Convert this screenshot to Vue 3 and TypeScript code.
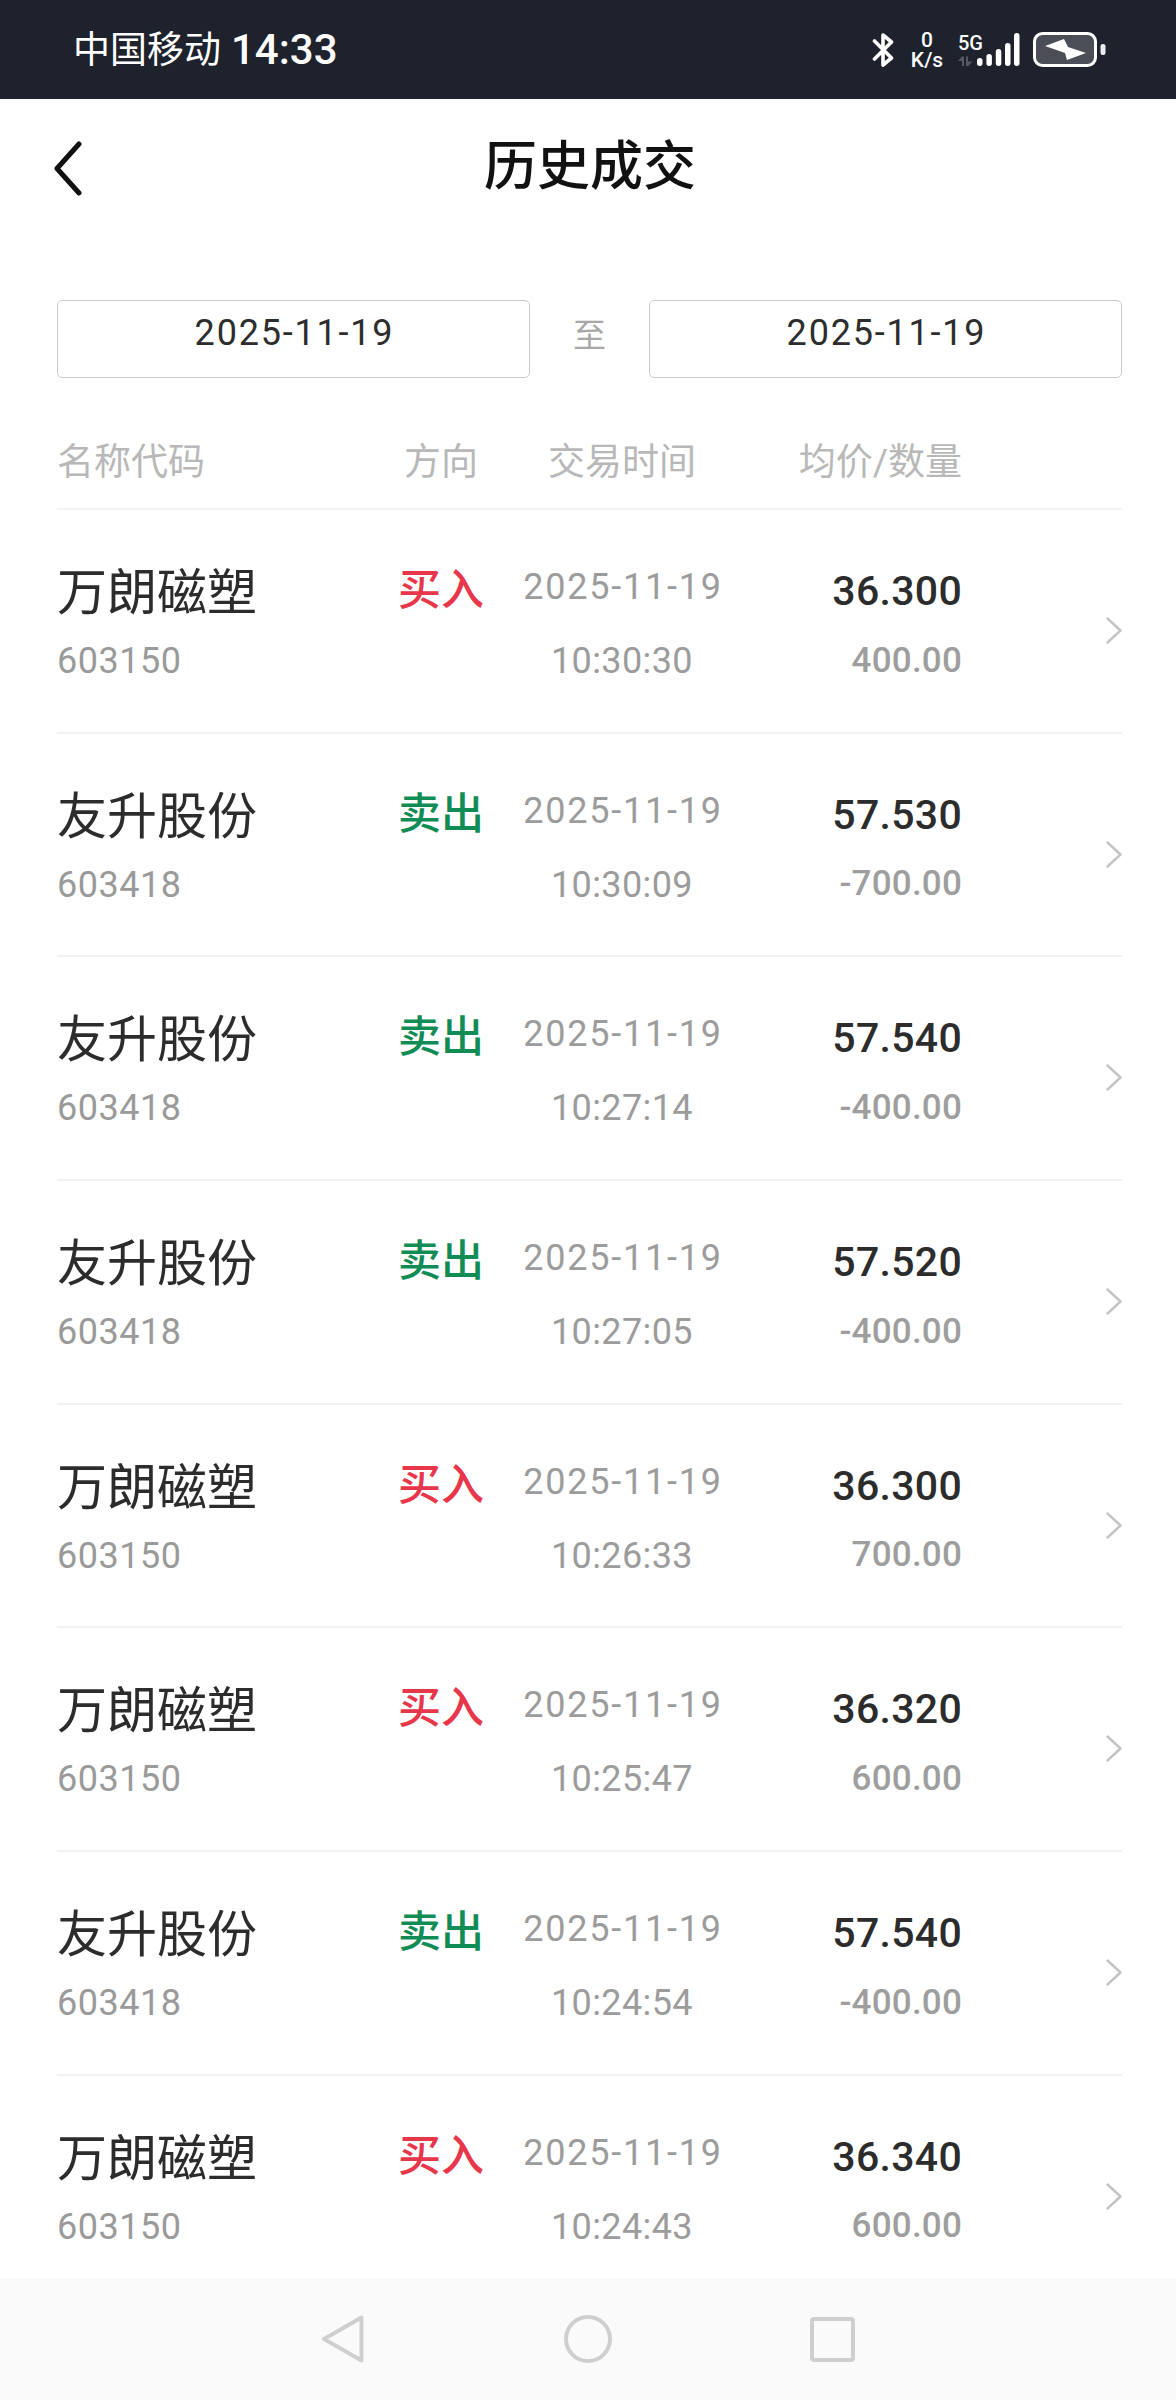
<script setup lang="ts">
type Trade = {
  name: string;
  code: string;
  side: "buy" | "sell";
  time: string;
  price: string;
  qty: string;
};

const trades: Trade[] = [
  { name: "万朗磁塑", code: "603150", side: "buy", time: "10:30:30", price: "36.300", qty: "400.00" },
  { name: "友升股份", code: "603418", side: "sell", time: "10:30:09", price: "57.530", qty: "-700.00" },
  { name: "友升股份", code: "603418", side: "sell", time: "10:27:14", price: "57.540", qty: "-400.00" },
  { name: "友升股份", code: "603418", side: "sell", time: "10:27:05", price: "57.520", qty: "-400.00" },
  { name: "万朗磁塑", code: "603150", side: "buy", time: "10:26:33", price: "36.300", qty: "700.00" },
  { name: "万朗磁塑", code: "603150", side: "buy", time: "10:25:47", price: "36.320", qty: "600.00" },
  { name: "友升股份", code: "603418", side: "sell", time: "10:24:54", price: "57.540", qty: "-400.00" },
  { name: "万朗磁塑", code: "603150", side: "buy", time: "10:24:43", price: "36.340", qty: "600.00" },
];

const day = "2025-11-19";
</script>

<template>
  <div class="page">
    <header class="status">
      <div class="status-left">
        <span class="carrier">中国移动</span>
        <span class="clock">14:33</span>
      </div>
      <div class="status-right">
        <svg class="bt" viewBox="0 0 22 36" fill="none" stroke="#fff" stroke-width="3.6" stroke-linecap="round" stroke-linejoin="round">
          <path d="M2.500 9 19.500 26 11 33V3l8.500 7L2.500 27" />
        </svg>
        <div class="speed">
          <span>0</span>
          <span>K/s</span>
        </div>
        <div class="signal">
          <span class="five-g">5G</span>
          <svg viewBox="0 0 62 34" fill="#fff">
            <path d="M4 33V28H0L4 23.500H6V33zM8 23.500V33H10L14.500 28.500H10V23.500z" fill="#565961" />
            <rect x="19" y="25" width="5.500" height="8" rx="2.700" />
            <rect x="28.400" y="21" width="5.500" height="12" rx="2.700" />
            <rect x="37.800" y="16" width="5.500" height="17" rx="2.700" />
            <rect x="47" y="10" width="5.500" height="23" rx="2.700" />
            <rect x="56" y="0" width="5.500" height="33" rx="2.700" />
          </svg>
        </div>
        <svg class="battery" viewBox="0 0 73 36">
          <rect x="1.500" y="1.500" width="61" height="32" rx="8" fill="#4b4d57" stroke="#fff" stroke-width="3" />
          <path d="M12 14 31 7 35 15 53 21 34 28 32 21z" fill="#fff" />
          <rect x="67.500" y="12" width="5" height="11" rx="2.200" fill="#ececee" />
        </svg>
      </div>
    </header>

    <div class="title-bar">
      <svg class="back" viewBox="0 0 30 56" fill="none" stroke="#111" stroke-width="5" stroke-linecap="round" stroke-linejoin="round">
        <path d="M26 3 4 27.500 26 52" />
      </svg>
      <h1 class="title">历史成交</h1>
    </div>

    <div class="range">
      <div class="date-box">{{ day }}</div>
      <span class="range-to">至</span>
      <div class="date-box">{{ day }}</div>
    </div>

    <div class="grid head">
      <span>名称代码</span>
      <span class="center">方向</span>
      <span class="center">交易时间</span>
      <span class="right">均价/数量</span>
    </div>

    <div class="list">
      <div v-for="(t, i) in trades" :key="i" class="grid row">
        <div class="cell">
          <span class="name">{{ t.name }}</span>
          <span class="code">{{ t.code }}</span>
        </div>
        <div class="cell center">
          <span class="side" :class="t.side">{{ t.side === "buy" ? "买入" : "卖出" }}</span>
        </div>
        <div class="cell center">
          <span class="when date">{{ day }}</span>
          <span class="when">{{ t.time }}</span>
        </div>
        <div class="cell right">
          <span class="price">{{ t.price }}</span>
          <span class="qty">{{ t.qty }}</span>
        </div>
        <svg class="chevron" viewBox="0 0 16 27" fill="none" stroke="#c4c4c4" stroke-width="2.400" stroke-linecap="round" stroke-linejoin="round">
          <path d="M1.500 1.500 14.500 13.500 1.500 25.500" />
        </svg>
      </div>
    </div>

    <nav class="nav">
      <svg class="nav-back" viewBox="0 0 43 48" fill="none" stroke="#cfcfcf" stroke-width="4" stroke-linejoin="round">
        <path d="M40.500 2.500V45.500L3 24z" />
      </svg>
      <svg class="nav-home" viewBox="0 0 48 48" fill="none" stroke="#cfcfcf" stroke-width="4">
        <circle cx="24" cy="24" r="22" />
      </svg>
      <svg class="nav-recent" viewBox="0 0 45 45" fill="none" stroke="#cfcfcf" stroke-width="4" stroke-linejoin="round">
        <rect x="2" y="2" width="41" height="41" rx="2" />
      </svg>
    </nav>
  </div>
</template>

<style>
body {
  margin: 0;
  background: #fff;
}
</style>

<style scoped>
.page {
  width: 1176px;
  height: 2400px;
  display: flex;
  flex-direction: column;
  overflow: hidden;
  background: #fff;
  font-family: Roboto, "Noto Sans CJK SC", sans-serif;
}

.status {
  flex: 0 0 99px;
  display: flex;
  align-items: center;
  justify-content: space-between;
  padding: 0 70px 0 73px;
  background: #1e222d;
  color: #fff;
}

.status-left {
  display: flex;
  align-items: center;
  gap: 10px;
}

.carrier {
  font-size: 37px;
  margin-bottom: 5px;
}

.clock {
  font-size: 42px;
  font-weight: 500;
}

.status-right {
  display: flex;
  align-items: center;
}

.bt {
  width: 22px;
  height: 36px;
}

.speed {
  width: 34px;
  margin-left: 16px;
  display: flex;
  flex-direction: column;
  align-items: center;
  font-size: 21px;
  font-weight: 500;
  line-height: 20px;
}

.signal {
  position: relative;
  width: 62px;
  height: 34px;
  margin-left: 14px;
}

.signal svg {
  display: block;
  width: 62px;
  height: 34px;
}

.five-g {
  position: absolute;
  left: 0;
  top: 1px;
  font-size: 20px;
  line-height: 18px;
  font-weight: 500;
}

.battery {
  width: 73px;
  height: 36px;
  margin-left: 13px;
}

.title-bar {
  position: relative;
  flex: 0 0 132px;
  display: flex;
  align-items: center;
  justify-content: center;
}

.back {
  position: absolute;
  left: 53px;
  top: 42px;
  width: 30px;
  height: 56px;
}

.title {
  margin: 0;
  font-size: 53px;
  font-weight: 500;
  color: #111;
  line-height: 132px;
  position: relative;
  left: 2px;
  top: 2px;
}

.range {
  margin-top: 69px;
  padding: 0 54px 0 57px;
  display: flex;
  align-items: center;
}

.date-box {
  flex: 1;
  height: 78px;
  box-sizing: border-box;
  border: 1px solid #cccccc;
  border-radius: 5px;
  padding-left: 2px;
  text-align: center;
  font-size: 36px;
  line-height: 64px;
  letter-spacing: 1.800px;
  color: #2d2d2d;
}

.range-to {
  flex: 0 0 119px;
  padding-bottom: 12px;
  text-align: center;
  font-size: 33px;
  color: #a8a8a8;
}

.grid {
  display: grid;
  grid-template-columns: 334px 100px 262px 209px 1fr;
  margin: 0 54px 0 57px;
}

.head {
  height: 132px;
  align-items: center;
  box-sizing: border-box;
  padding-top: 31px;
  font-size: 37px;
  color: #b8b8b8;
  border-bottom: 2px solid #f3f3f3;
}

.list {
  flex: 1;
  min-height: 0;
  overflow: hidden;
}

.row {
  height: 223.700px;
  box-sizing: border-box;
  padding-top: 48px;
  border-bottom: 2px solid #f2f2f2;
}

.cell {
  display: flex;
  flex-direction: column;
}

.center {
  text-align: center;
}

.cell.center {
  align-items: center;
}

.right {
  text-align: right;
}

.cell.right {
  align-items: flex-end;
}

.name {
  padding-top: 2px;
  font-size: 50px;
  line-height: 66px;
  color: #2c2c2c;
}

.code {
  margin-top: 4px;
  font-size: 36px;
  line-height: 62px;
  letter-spacing: 0.500px;
  color: #9a9a9a;
}

.side {
  margin-top: 1px;
  font-size: 43px;
  font-weight: 500;
  line-height: 62px;
}

.side.buy {
  color: #e8374a;
}

.side.sell {
  color: #128c55;
}

.when {
  font-size: 36px;
  line-height: 74px;
  letter-spacing: 0.400px;
  color: #9c9c9c;
}

.when.date {
  margin-top: -8px;
  padding-left: 2px;
  letter-spacing: 1.750px;
}

.price {
  font-size: 41px;
  font-weight: 500;
  line-height: 66px;
  letter-spacing: 0.300px;
  color: #2c2c2c;
}

.qty {
  margin-top: 5.500px;
  font-size: 35px;
  font-weight: 500;
  line-height: 62px;
  letter-spacing: 0.200px;
  color: #9e9e9e;
}

.chevron {
  justify-self: end;
  width: 16px;
  height: 27px;
  margin-top: 59px;
}

.nav {
  flex: 0 0 122px;
  display: flex;
  align-items: center;
  justify-content: center;
  background: #fafafa;
}

.nav svg {
  display: block;
}

.nav-back {
  width: 43px;
  height: 48px;
  margin-right: 200px;
}

.nav-home {
  width: 48px;
  height: 48px;
  margin-right: 198px;
}

.nav-recent {
  width: 45px;
  height: 45px;
}
</style>
